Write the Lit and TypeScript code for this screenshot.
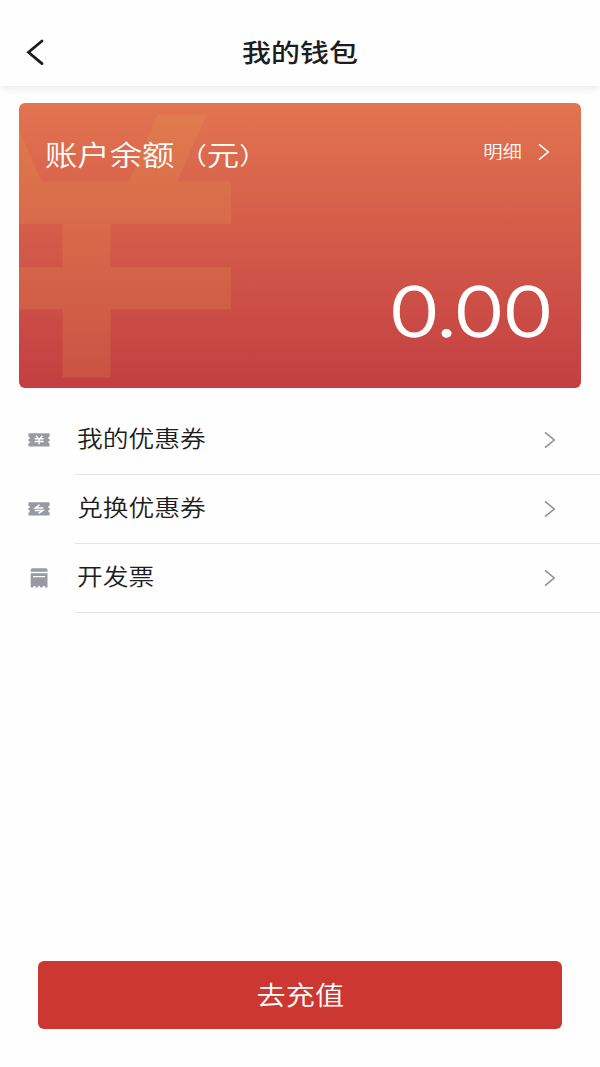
import { LitElement, html, css, svg } from "lit";
import { customElement, property } from "lit/decorators.js";

const chevron = html`<svg class="chevron" width="12" height="18" viewBox="0 0 12 18" fill="none" stroke="currentColor">
  <path d="M1 1.3L10.3 9L1 16.7" />
</svg>`;

const ticket = svg`<path fill="#989aa2" d="M0.6 0.8H20.8Q21.6 0.8 21.6 1.6V4.2Q20.2 4.2 20.2 5.4T21.6 6.6V8.6Q20.2 8.6 20.2 9.7T21.6 10.9V13.2Q21.6 14 20.800 14H1.2Q0.4 14 0.4 13.2V10.9Q1.8 10.9 1.8 9.7T0.4 8.6V6.6Q1.8 6.6 1.8 5.4T0.4 4.2V1.600Q0.4 0.8 1.2 0.8Z" />`;

const icons: Record<string, unknown> = {
  coupon: html`<svg width="22" height="22" viewBox="0 -3.5 22 22">
    ${ticket}
    <path d="M8 3.3L10 5.8M14.3 3.3L12.3 5.8M6.6 6.3H15.7M6.6 9H15.7M11.1 6V11.8" fill="none" stroke="#fff" stroke-width="1.4" />
  </svg>`,
  exchange: html`<svg width="22" height="22" viewBox="0 -3.5 22 22">
    ${ticket}
    <path d="M11.5 3.4L7.3 6.5H15.3M6.7 8.9H14.8L10.6 11.8" fill="none" stroke="#fff" stroke-width="1.5" />
  </svg>`,
  invoice: html`<svg width="22" height="22" viewBox="0 0 22 22" fill="#989aa2">
    <path d="M2.7 4.8V3Q2.7 1.3 4.4 1.3H17.8Q19.5 1.3 19.5 3V4.8Z" />
    <path fill-rule="evenodd" d="M2.7 6.2H19.5V20.6H17.2Q17 18.8 15.8 18.8T14.3 20.6H12.4Q12.2 18.8 11.1 18.8T9.7 20.6H7.8Q7.6 18.8 6.4 18.8T5 20.6H2.7ZM5 8.9V10.2H17.1V8.9Z" />
  </svg>`,
};

@customElement("wallet-row")
export class WalletRow extends LitElement {
  @property() icon = "coupon";
  @property() label = "";

  static styles = css`
    :host { display: flex; height: 69px; }
    .icon { width: 75px; display: flex; align-items: center; padding: 0 0 1px 28px; box-sizing: border-box; }
    .body {
      flex: 1; display: flex; align-items: center; justify-content: space-between;
      padding: 0 44px 1px 2px; border-bottom: 1px solid #e4e4e4;
      font-size: 22.6px; font-weight: 350; color: #1d1d1f;
    }
    .label { transform: scaleX(1.14); transform-origin: left; padding-bottom: 3px; }
    .chevron { color: #8d8e92; stroke-width: 1.5; display: block; }
  `;

  render() {
    return html`<div class="icon">${icons[this.icon]}</div>
      <div class="body"><span class="label">${this.label}</span>${chevron}</div>`;
  }
}

@customElement("app-root")
export class AppRoot extends LitElement {
  static styles = css`
    :host {
      display: flex; flex-direction: column; height: 1067px; background: #fefefe;
      font-family: "Noto Sans CJK SC", sans-serif; line-height: 1.2; color: #1d1d1f;
    }
    .header {
      display: grid; grid-template-columns: 60px 1fr 60px; align-items: center;
      height: 86px; padding-top: 17px; box-sizing: border-box; background: #fefefe;
      box-shadow: 0 1px 9px rgba(0, 0, 0, 0.1);
    }
    .back { padding: 1px 0 0 26px; display: flex; }
    .title { margin: 0; padding-bottom: 1px; text-align: center; font-size: 25.4px; font-weight: 500; transform: scaleX(1.14); }
    .card {
      display: grid; grid-template-rows: auto 1fr; overflow: hidden;
      height: 285px; margin: 17px 19px 0; box-sizing: border-box;
      border-radius: 6px; color: #fff; position: relative;
      background: linear-gradient(#e27450, #c33f42);
    }
    .mark { position: absolute; left: 0; top: 0; }
    .top { position: relative; display: flex; justify-content: space-between; padding: 34px 31px 0 26px; }
    .name { display: flex; align-items: center; height: 34px; font-size: 28.4px; font-weight: 350; transform: scaleX(1.14); transform-origin: left; }
    .paren { width: 28.4px; font-size: 24px; display: flex; }
    .open { justify-content: flex-end; }
    .detail { display: flex; height: 30px; align-items: center; gap: 16px; font-size: 17px; font-weight: 350; }
    .detail-text { transform: scaleX(1.14); transform-origin: right; padding-bottom: 1px; }
    .chevron { stroke-width: 1.6; display: block; }
    .amount {
      position: relative; justify-self: end; align-self: end; padding: 0 24px 36px 0;
      font-family: Lato, sans-serif; font-size: 69px; font-weight: 300; letter-spacing: 3.7px;
      -webkit-text-stroke: 2.4px #fff;
      transform: scaleX(1.12); transform-origin: right;
    }
    .whole { letter-spacing: 0.9px; }
    .rows { padding-top: 18px; }
    .pay {
      margin: auto 38px 38px; height: 68px; border: 0; border-radius: 6px; background: #cc3831;
      color: #fff; font: 350 25.6px/1.2 "Noto Sans CJK SC", sans-serif; padding: 0 0 2px;
    }
    .pay-text { display: inline-block; transform: scaleX(1.14); }
  `;

  render() {
    return html`
      <header class="header">
        <div class="back">
          <svg width="18" height="27" viewBox="0 0 18 27" fill="none" stroke="#1d1d1f" stroke-width="2.8" stroke-linecap="round">
            <path d="M16 2L2.5 13.3L16 24.6" />
          </svg>
        </div>
        <h1 class="title">我的钱包</h1>
      </header>
      <section class="card">
        <svg class="mark" width="213" height="285" viewBox="0 0 213 285">
          <path fill="#e4a04c" fill-opacity="0.2" d="M0 27L22.5 78.5H110L138.5 11.5H187.5L158.5 78.5H212V121H91.5V164H212V206.500H91.5V274.500H43.500V206.500H0V164H43.500V121H0Z" />
        </svg>
        <div class="top">
          <span class="name">账户余额<span class="paren open">（</span>元<span class="paren">）</span></span>
          <span class="detail"><span class="detail-text">明细</span>${chevron}</span>
        </div>
        <div class="amount"><span class="whole">0.</span>00</div>
      </section>
      <main class="rows">
        <wallet-row icon="coupon" label="我的优惠券"></wallet-row>
        <wallet-row icon="exchange" label="兑换优惠券"></wallet-row>
        <wallet-row icon="invoice" label="开发票"></wallet-row>
      </main>
      <button class="pay"><span class="pay-text">去充值</span></button>
    `;
  }
}
